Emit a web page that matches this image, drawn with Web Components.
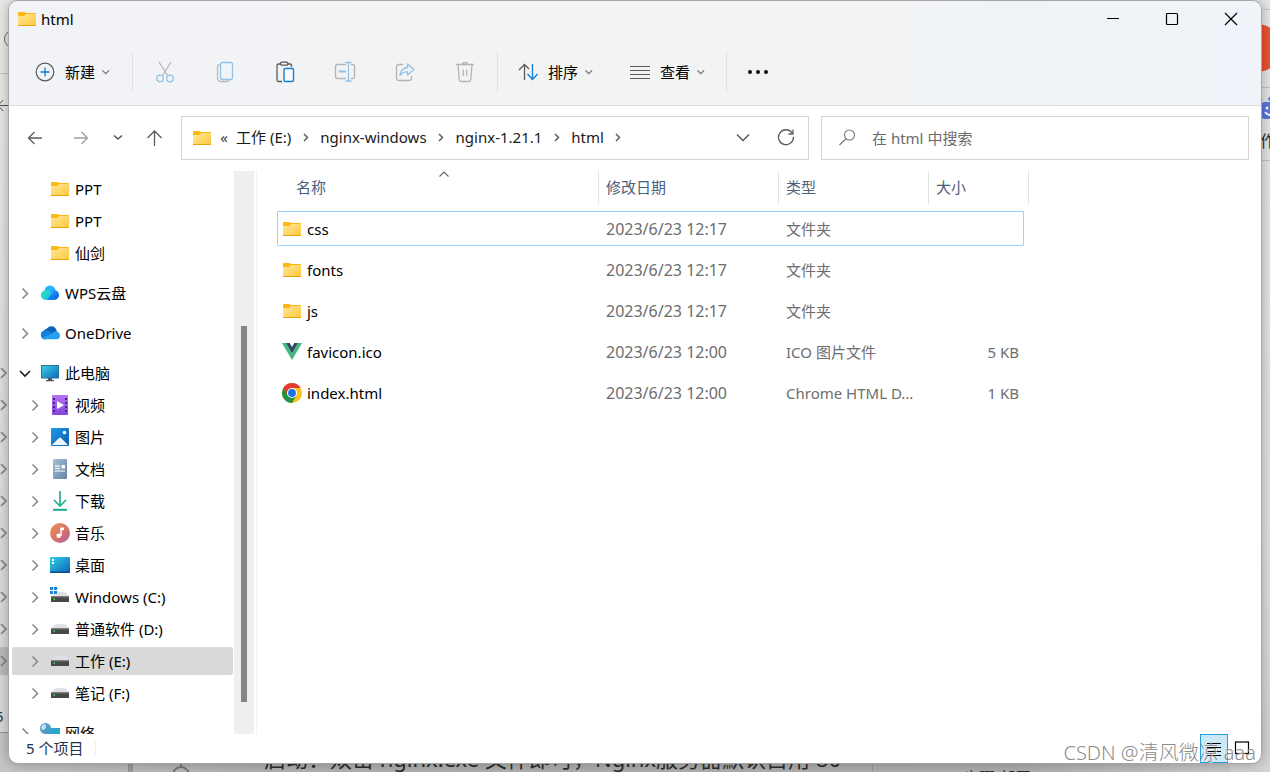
<!DOCTYPE html>
<html lang="zh-CN">
<head>
<meta charset="utf-8">
<title>html</title>
<style>
  html, body { margin: 0; height: 100%; }
  body {
    position: relative;
    overflow: hidden;
    background: #c4c4c4;
    color: #000;
    font: 15px/20px "Noto Sans", "Noto Sans CJK SC", sans-serif;
  }
</style>
</head>
<body>
<desktop-backdrop></desktop-backdrop>
<explorer-window></explorer-window>
<water-mark>CSDN @清风微凉 aaa</water-mark>

<script>
const ICONS = {
  folder: [20, 20, `<defs><linearGradient id="f" x1="0" y1="0" x2="1" y2="1"><stop offset="0" stop-color="#ffe79b"/><stop offset="1" stop-color="#ffc83a"/></linearGradient></defs>
    <path d="M1 4q0-1 1-1h5q1 0 2 1h9q1 0 1 1v11H1z" fill="#fbb612"/><path d="M1 7h6l2-2h10v11q0 1-1 1H2q-1 0-1-1z" fill="url(#f)"/><path d="M1 16.5h18" stroke="#e5a50e"/>`],
  chevR: [16, 16, `<path d="M5.5 3.5 10.5 8.5 5.5 13.5" fill="none" stroke="#8a8a8a" stroke-width="1.6"/>`],
  chevOpen: [16, 16, `<path d="M3 6l5 5 5-5" fill="none" stroke="#1c1c1c" stroke-width="1.6"/>`],
  crumbSep: [10, 14, `<path d="M3 4l3.500 3.500L3 11" fill="none" stroke="#5f5f5f" stroke-width="1.5"/>`],
  smallDown: [10, 10, `<path d="M1.500 3.500l3.300 3.200L8.100 3.500" fill="none" stroke="#777" stroke-width="1.1"/>`],
  navDown: [14, 14, `<path d="M3 4.500l4 3.500 4-3.500" fill="none" stroke="#555" stroke-width="1.5"/>`],
  boxDown: [16, 16, `<path d="M1 4.500l6 6 6-6" fill="none" stroke="#555" stroke-width="1.3"/>`],
  sortUp: [12, 8, `<path d="M1.500 5.500 6 1l4.500 4.500" fill="none" stroke="#666" stroke-width="1.1"/>`],
  back: [20, 20, `<path d="M17 10H3.500M9.500 4l-6 6 6 6" fill="none" stroke="#5c5c5c" stroke-width="1.3"/>`],
  forward: [20, 20, `<path d="M3 10h13.500M10.500 4l6 6-6 6" fill="none" stroke="#a0a0a0" stroke-width="1.3"/>`],
  up: [20, 20, `<path d="M10.500 18V3M3.500 10l7-7 7 7" fill="none" stroke="#5c5c5c" stroke-width="1.3"/>`],
  refresh: [20, 20, `<path d="M15.200 5A7.500 7.500 0 1 0 16.500 8.800M16 1.500V6h-4.500" fill="none" stroke="#5c5c5c" stroke-width="1.300"/>`],
  search: [20, 20, `<circle cx="12.500" cy="7" r="5" fill="none" stroke="#777" stroke-width="1.1"/><path d="M9 10.800 2.500 17" stroke="#777" stroke-width="1.200"/>`],
  min: [14, 14, `<path d="M1 6.500h12" stroke="#000"/>`],
  max: [14, 14, `<rect x="1.500" y="1.500" width="11" height="11" rx="1" fill="none" stroke="#000" stroke-width="1.200"/>`],
  close: [14, 14, `<path d="M1 1l12 12M13 1 1 13" stroke="#000" stroke-width="1.200"/>`],
  plus: [20, 20, `<circle cx="10" cy="10" r="8.800" fill="none" stroke="#5a5a5a" stroke-width="1.200"/><path d="M10 5.500v9M5.500 10h9" stroke="#0f7bd0" stroke-width="1.300"/>`],
  cut: [20, 22, `<path d="M4 1l8.800 14M16 1 7.200 15" fill="none" stroke="#b4b4b4" stroke-width="1.200"/><circle cx="5" cy="17.500" r="3.300" fill="none" stroke="#8fc3ea" stroke-width="1.300"/><circle cx="15" cy="17.500" r="3.300" fill="none" stroke="#8fc3ea" stroke-width="1.300"/>`],
  copy: [20, 22, `<path d="M4.500 3.500Q2.500 4 2.500 6v11q0 3.500 3.500 3.500h5.500q2 0 2.600-1.500" fill="none" stroke="#b9b9b9" stroke-width="1.300"/><rect x="5.500" y="1.500" width="12" height="17" rx="2" fill="none" stroke="#8fc3ea" stroke-width="1.300"/>`],
  paste: [20, 22, `<path d="M6 3H3.500Q2 3 2 4.500v14.500Q2 20.500 3.500 20.500H7M12.500 3H15q1.500 0 1.500 1.500V6" fill="none" stroke="#5a5a5a" stroke-width="1.300"/><rect x="5.500" y="1.200" width="7.500" height="3" rx="1.500" fill="none" stroke="#5a5a5a" stroke-width="1.300"/><rect x="9" y="7.500" width="9.500" height="13" rx="1.500" fill="#fafafa" stroke="#1580d2" stroke-width="1.400"/>`],
  rename: [22, 22, `<path d="M12 3.500H3.500Q1.500 3.500 1.500 5.500v10q0 2 2 2H12M17 3.500h1.500q2 0 2 2v10q0 2-2 2H17" fill="none" stroke="#b4b4b4" stroke-width="1.300"/><path d="M4.500 10.500H12" stroke="#8fc3ea" stroke-width="2"/><path d="M11.500 1.500h6M14.500 1.500v18.500M11.500 20h6" fill="none" stroke="#8fc3ea" stroke-width="1.300"/>`],
  share: [20, 22, `<path d="M8 3.500H4Q1.500 3.500 1.500 6v11Q1.500 19.500 4 19.500h10q2.500 0 2.500-2.500V15" fill="none" stroke="#b4b4b4" stroke-width="1.300"/><path d="M12.500 3 19 8.500 12.500 14V11Q8 10.500 5 14.500q.5-7 7.500-8z" fill="none" stroke="#8fc3ea" stroke-width="1.300" stroke-linejoin="round"/>`],
  trash: [20, 22, `<path d="M1 3.500h18M3 3.500l1.200 15q.2 2 2 2h7.600q1.800 0 2-2L17 3.500M7.500 3.500Q7.500 1.500 10 1.500t2.500 2M8.300 8.500v6.500M11.700 8.500v6.500" fill="none" stroke="#b4b4b4" stroke-width="1.300"/>`],
  sort: [20, 20, `<path d="M6.500 18V2.500M1 8l5.500-5.500L11 7" fill="none" stroke="#5a5a5a" stroke-width="1.300"/><path d="M14.500 2v15.500M9.500 12l5 5.500 5-5.500" fill="none" stroke="#1580d2" stroke-width="1.400"/>`],
  view: [20, 20, `<path d="M0 4.500h20M0 8.500h20M0 12.500h20M0 16.500h20" stroke="#5a5a5a" stroke-width="1.200"/>`],
  more: [22, 20, `<circle cx="2" cy="10" r="2"/><circle cx="10" cy="10" r="2"/><circle cx="18" cy="10" r="2"/>`],
  wps: [20, 20, `<defs><linearGradient id="a" x1="0" y1="0" x2="1" y2="1"><stop offset="0" stop-color="#37e8b4"/><stop offset="1" stop-color="#12b4f5"/></linearGradient><linearGradient id="b" x1="0" y1="0" x2="1" y2="1"><stop offset="0" stop-color="#2ab4ff"/><stop offset="1" stop-color="#0550d8"/></linearGradient></defs>
    <circle cx="10" cy="8" r="5.500" fill="#26b2ff"/><circle cx="14" cy="12" r="5" fill="url(#b)"/><path d="M6 17a5 5 0 1 1 2-9.500q3 1 4.500 3.500L9 16q-1 1-3 1z" fill="url(#a)"/><path d="M7 17h7.500l-3-6z" fill="#0b7df0"/>`],
  onedrive: [20, 20, `<path d="M3 9q1-3 4-3.500 2-2.500 5-2.200 4 .7 5 5.200l-6 3z" fill="#0a64b8"/><path d="M4.500 16.500A4.700 4.700 0 0 1 4 7.500q3-1 5.500.7L14 11 7 16z" fill="#1480dc"/><path d="M2.500 15 12 10.500Q15 7.500 18 9q2 1.200 2 3.500 0 3.500-3.500 3.800H5q-1.500 0-2.500-1.300z" fill="#27a1ee"/>`],
  pc: [20, 20, `<defs><linearGradient id="p" x1="0" y1="0" x2="1" y2="1"><stop offset="0" stop-color="#3ad2e6"/><stop offset="1" stop-color="#0d68ba"/></linearGradient></defs><rect x="1.500" y="2.500" width="17" height="12.500" fill="url(#p)" stroke="#26739c"/><path d="M8 15h4v2h2v1.300H6V17h2z" fill="#4c5863"/>`],
  video: [20, 20, `<defs><linearGradient id="v" x1="0" y1="0" x2="0" y2="1"><stop offset="0" stop-color="#b574f2"/><stop offset="1" stop-color="#8446dc"/></linearGradient></defs><rect x="2" y="0" width="16" height="20" rx="1" fill="url(#v)"/><path d="M3 3h2v2H3zm0 4h2v2H3zm0 4h2v2H3zm0 4h2v2H3zM15 3h2v2h-2zm0 4h2v2h-2zm0 4h2v2h-2zm0 4h2v2h-2z" fill="#4a2383"/><path d="M7 6l7 4.200L7 14z" fill="#fff"/>`],
  image: [20, 20, `<defs><linearGradient id="i" x1="0" y1="0" x2="1" y2="1"><stop offset="0" stop-color="#1e9be6"/><stop offset="1" stop-color="#0a5cb0"/></linearGradient></defs><rect x="1" y="1" width="18" height="18" rx="1" fill="url(#i)"/><circle cx="14.500" cy="5.500" r="1.700" fill="#fff"/><path d="M2 18l7-7q1-1 2 0l7 7z" fill="#f1f7fd"/>`],
  doc: [20, 20, `<defs><linearGradient id="d" x1="0" y1="0" x2="1" y2="1"><stop offset="0" stop-color="#a9c1d6"/><stop offset="1" stop-color="#6482a4"/></linearGradient></defs><rect x="3" y="0" width="14" height="20" rx="1" fill="url(#d)"/><path d="M5 7.200h5M5 9.500h5M5 12h10" stroke="#fff" stroke-width="1.200"/><path d="M11.500 6H15v3.500h-3.500z" fill="#fff"/>`],
  download: [20, 20, `<path d="M10 0v14.500M4 9l6 6 6-6" fill="none" stroke="#22b08d" stroke-width="1.700"/><path d="M3 18.800h14" stroke="#1aa894" stroke-width="2"/>`],
  music: [20, 20, `<defs><linearGradient id="m" x1="0" y1="0" x2="1" y2="1"><stop offset="0" stop-color="#f0914b"/><stop offset=".6" stop-color="#d4706f"/><stop offset="1" stop-color="#a860b0"/></linearGradient></defs><circle cx="10" cy="10" r="10" fill="url(#m)"/><circle cx="8.700" cy="12.800" r="2.300" fill="#fff"/><path d="M10.200 13V4.500H14v2.700h-2.300V13z" fill="#fff"/>`],
  desktop: [20, 20, `<defs><linearGradient id="k" x1="0" y1="0" x2="1" y2="1"><stop offset="0" stop-color="#2fd2e2"/><stop offset="1" stop-color="#0c62bb"/></linearGradient></defs><rect y="2" width="20" height="16" rx="1" fill="url(#k)"/><path d="M2 4h2v2H2zm0 3h2v2H2z" fill="#fff"/><path d="M0 17.200h20" stroke="#0b4b86" stroke-width="1.500"/>`],
  drive: [20, 20, `<path d="M4 6.500Q5 5 7 5h7q2 0 3 1.500L19 10H1z" fill="#dfe0e3"/><rect x="1" y="9.500" width="18" height="5.500" fill="#484848"/><path d="M1 10h18" stroke="#6a6a6a"/><path d="M3.500 11.500h1.500V13H3.500z" fill="#36e05a"/>`],
  sysdrive: [20, 20, `<path d="M4 6.500Q5 5 7 5h7q2 0 3 1.500L19 10H1z" fill="#dfe0e3"/><rect x="1" y="9.500" width="18" height="5.500" fill="#484848"/><path d="M1 10h18" stroke="#6a6a6a"/><path d="M3.500 11.500h1.500V13H3.500z" fill="#36e05a"/><path d="M0 0h8v7.500h-8z" fill="#fff"/><path d="M0 0h3.200v3H0zm4 0h3.200v3H4zM0 4h3.200v3H0zm4 0h3.200v3H4z" fill="#1b84d8"/>`],
  network: [20, 20, `<rect x="6" y="5" width="14" height="11" fill="#2ba6cf"/><circle cx="5.500" cy="5.500" r="5.500" fill="#4c9dc9"/><path d="M3 1.500q4-1 3 2.500T2 7Q0 4 3 1.500z" fill="#bfe2f0"/>`],
  vue: [20, 20, `<path d="M0 1h4l6 10.500L16 1h4L10 18z" fill="#41b883"/><path d="M4 1h3.700L10 5l2.300-4H16l-6 10.500z" fill="#35495e"/>`],
  chrome: [20, 20, `<circle cx="10" cy="10" r="10" fill="#fbc116"/><path d="M10 10 1.340 5A10 10 0 0 0 10 20l4.300-7.500z" fill="#229342"/><path d="M1.340 5A10 10 0 0 1 18.660 5H10L5.700 12.500z" fill="#e33b2e"/><circle cx="10" cy="10" r="5" fill="#fff"/><circle cx="10" cy="10" r="3.900" fill="#1a73e8"/>`],
  details: [16, 16, `<path d="M1 2.500h14M1 6.500h14M1 10.500h14M1 14.500h14" stroke="#000"/>`],
  tiles: [16, 16, `<rect x="1.500" y="1" width="13" height="11.500" fill="none" stroke="#000" stroke-width="1.200"/>`]
};

function define(name, html, setup) {
  const template = document.createElement('template');
  template.innerHTML = html;
  customElements.define(name, class extends HTMLElement {
    constructor() {
      super();
      this.attachShadow({ mode: 'open' }).append(template.content.cloneNode(true));
    }
    connectedCallback() { if (setup) setup(this, this.shadowRoot); }
  });
}

define('ui-icon', `<style>:host{display:inline-flex;flex:none}svg{display:block}</style><span></span>`, (el, root) => {
  const [w, h, body] = ICONS[el.getAttribute('name')];
  root.querySelector('span').innerHTML = `<svg width="${w}" height="${h}" viewBox="0 0 ${w} ${h}" aria-hidden="true">${body}</svg>`;
});

const BUTTON_RESET = `button{font:inherit;color:inherit;background:none;border:0;margin:0;padding:0;display:flex;align-items:center;justify-content:center}`;

define('title-bar', `
<style>
  :host { display: flex; align-items: center; height: 36px; padding-right: 1px; }
  .name { display: flex; align-items: center; gap: 4px; padding-left: 8px; flex: 1; }
  ${BUTTON_RESET}
  button { width: 59px; height: 36px; }
</style>
<div class="name"><ui-icon name="folder"></ui-icon><span><slot></slot></span></div>
<button aria-label="最小化"><ui-icon name="min"></ui-icon></button>
<button aria-label="最大化"><ui-icon name="max"></ui-icon></button>
<button aria-label="关闭"><ui-icon name="close"></ui-icon></button>`);

define('tool-button', `
<style>
  :host { display: block; }
  ${BUTTON_RESET}
  button { height: 40px; gap: 10px; padding: 0 18px; }
  .label { display: flex; align-items: center; gap: 6px; }
  :host([first]) button { padding: 0 19px 0 26px; }
  :host([compact]) button { width: 60px; padding: 0; }
</style>
<button></button>`, (el, root) => {
  const compact = el.hasAttribute('compact');
  const button = root.querySelector('button');
  button.innerHTML = `<ui-icon name="${el.getAttribute('icon')}"></ui-icon>` +
    (compact ? '' : `<span class="label"><slot></slot><ui-icon name="smallDown"></ui-icon></span>`);
  if (compact) button.setAttribute('aria-label', el.getAttribute('label'));
});

define('tool-bar', `
<style>
  :host { display: flex; align-items: center; height: 66px; padding-top: 2px; border-bottom: 1px solid #dcdde0; }
  i { width: 1px; height: 40px; margin: 0 2px; background: #dfe0e2; }
</style>
<tool-button first icon="plus">新建</tool-button><i></i>
<tool-button compact icon="cut" label="剪切"></tool-button>
<tool-button compact icon="copy" label="复制"></tool-button>
<tool-button compact icon="paste" label="粘贴"></tool-button>
<tool-button compact icon="rename" label="重命名"></tool-button>
<tool-button compact icon="share" label="共享"></tool-button>
<tool-button compact icon="trash" label="删除"></tool-button><i></i>
<tool-button icon="sort">排序</tool-button>
<tool-button icon="view">查看</tool-button><i></i>
<tool-button compact icon="more" label="更多"></tool-button>`);

define('address-row', `
<style>
  :host { display: grid; grid-template-columns: 172px 157fr 110fr; padding: 10px 12px 11px 0; }
  ${BUTTON_RESET}
  nav { display: grid; grid-template-columns: 52px 40px 34px 38px; align-items: center; }
  .box { display: flex; align-items: center; height: 42px; border: 1px solid #d6d6d6; background: #fff; }
  .path { padding: 0 0 0 10px; }
  .back { width: 24px; text-align: center; color: #444; padding-bottom: 2px; }
  .crumbs { display: flex; flex: 1; padding-bottom: 2px; }
  a { color: #1a1a1a; text-decoration: none; white-space: nowrap; }
  .sep { display: inline-flex; align-items: center; justify-content: center; width: 29px; }
  .path button { width: 43px; height: 42px; }
  .search { margin-left: 12px; padding-left: 15px; gap: 15px; }
  input { flex: 1; min-width: 0; border: 0; padding: 0; outline: 0; background: none; font: inherit; }
  input::placeholder { color: #6b6b6b; opacity: 1; }
</style>
<nav aria-label="导航">
  <button aria-label="后退"><ui-icon name="back"></ui-icon></button>
  <button aria-label="前进"><ui-icon name="forward"></ui-icon></button>
  <button aria-label="最近位置"><ui-icon name="navDown"></ui-icon></button>
  <button aria-label="向上"><ui-icon name="up"></ui-icon></button>
</nav>
<div class="box path">
  <ui-icon name="folder"></ui-icon><span class="back">«</span>
  <div class="crumbs">
    <a href="#">工作 (E:)</a><span class="sep"><ui-icon name="crumbSep"></ui-icon></span>
    <a href="#">nginx-windows</a><span class="sep"><ui-icon name="crumbSep"></ui-icon></span>
    <a href="#">nginx-1.21.1</a><span class="sep"><ui-icon name="crumbSep"></ui-icon></span>
    <a href="#">html</a><span class="sep"><ui-icon name="crumbSep"></ui-icon></span>
  </div>
  <button aria-label="展开"><ui-icon name="boxDown"></ui-icon></button>
  <button aria-label="刷新"><ui-icon name="refresh"></ui-icon></button>
</div>
<div class="box search">
  <ui-icon name="search"></ui-icon>
  <input type="search" placeholder="在 html 中搜索" aria-label="在 html 中搜索">
</div>`);

define('tree-item', `
<style>
  :host { display: block; padding: 2px 1px 2px 3px; }
  :host([root]) { margin-top: 8px; }
  a { display: flex; align-items: center; height: 28px; padding-left: 15px; border-radius: 2px; color: #000; text-decoration: none; white-space: nowrap; }
  :host([root]) a { padding-left: 5px; }
  :host([selected]) a { background: #d9d9d9; }
  .toggle { width: 16px; margin-right: 7px; display: flex; }
  .text { margin-left: 5px; }
</style>
<a href="#"></a>`, (el, root) => {
  const toggle = el.getAttribute('toggle');
  root.querySelector('a').innerHTML =
    `<span class="toggle">${toggle ? `<ui-icon name="${toggle}"></ui-icon>` : ''}</span>` +
    `<ui-icon name="${el.getAttribute('icon')}"></ui-icon><span class="text"><slot></slot></span>`;
});

define('nav-tree', `
<style>
  :host { display: grid; grid-template-columns: 225px 20px; min-height: 0; border-right: 1px solid #f3f3f3; padding-right: 2px; }
  .items { overflow: hidden; padding-top: 2px; min-height: 0; }
  .track { background: #efefef; display: grid; grid-template-rows: 155fr 376fr 32fr; justify-content: center; }
  .thumb { grid-row: 2; width: 6px; background: #868686; }
</style>
<div class="items">
  <tree-item icon="folder">PPT</tree-item>
  <tree-item icon="folder">PPT</tree-item>
  <tree-item icon="folder">仙剑</tree-item>
  <tree-item root toggle="chevR" icon="wps">WPS云盘</tree-item>
  <tree-item root toggle="chevR" icon="onedrive">OneDrive</tree-item>
  <tree-item root toggle="chevOpen" icon="pc">此电脑</tree-item>
  <tree-item toggle="chevR" icon="video">视频</tree-item>
  <tree-item toggle="chevR" icon="image">图片</tree-item>
  <tree-item toggle="chevR" icon="doc">文档</tree-item>
  <tree-item toggle="chevR" icon="download">下载</tree-item>
  <tree-item toggle="chevR" icon="music">音乐</tree-item>
  <tree-item toggle="chevR" icon="desktop">桌面</tree-item>
  <tree-item toggle="chevR" icon="sysdrive">Windows (C:)</tree-item>
  <tree-item toggle="chevR" icon="drive">普通软件 (D:)</tree-item>
  <tree-item selected toggle="chevR" icon="drive">工作 (E:)</tree-item>
  <tree-item toggle="chevR" icon="drive">笔记 (F:)</tree-item>
  <tree-item root toggle="chevR" icon="network">网络</tree-item>
</div>
<div class="track"><div class="thumb"></div></div>`);

const FILES = [
  ['folder', 'css', '2023/6/23 12:17', '文件夹', ''],
  ['folder', 'fonts', '2023/6/23 12:17', '文件夹', ''],
  ['folder', 'js', '2023/6/23 12:17', '文件夹', ''],
  ['vue', 'favicon.ico', '2023/6/23 12:00', 'ICO 图片文件', '5 KB'],
  ['chrome', 'index.html', '2023/6/23 12:00', 'Chrome HTML D...', '1 KB']
];

define('file-table', `
<style>
  :host { display: block; padding-left: 20px; }
  table { width: 752px; table-layout: fixed; border-collapse: separate; border-spacing: 0; }
  th { height: 37px; padding: 0; vertical-align: top; text-align: left; font-weight: 400; color: #4c607a; position: relative; }
  th div { height: 33px; line-height: 33px; border-right: 1px solid #e2e2e2; padding-left: 7px; box-sizing: border-box; }
  th:first-child div { padding-left: 19px; }
  .arrow { position: absolute; left: 50%; top: 0; line-height: 0; }
  td { height: 41px; padding: 0 0 0 7px; color: #6d6d6d; white-space: nowrap; }
  td:first-child { padding-left: 5px; color: #000; }
  td:nth-child(2) { font-size: 16px; }
  td:last-child { text-align: right; padding-right: 10px; }
  .name { display: flex; align-items: center; gap: 5px; }
  tr.focus { position: relative; }
  tr.focus::after { content: ""; position: absolute; inset: 3px 5px 3px 0; border: 1px solid #99d1ff; border-radius: 1px; }
</style>
<table>
  <colgroup><col style="width:322px"><col style="width:180px"><col style="width:150px"><col style="width:100px"></colgroup>
  <thead><tr>
    <th scope="col"><div>名称</div><span class="arrow"><ui-icon name="sortUp"></ui-icon></span></th>
    <th scope="col"><div>修改日期</div></th>
    <th scope="col"><div>类型</div></th>
    <th scope="col"><div>大小</div></th>
  </tr></thead>
  <tbody></tbody>
</table>`, (el, root) => {
  root.querySelector('tbody').innerHTML = FILES.map(([icon, name, date, type, size], i) =>
    `<tr${i ? '' : ' class="focus"'}><td><span class="name"><ui-icon name="${icon}"></ui-icon><span>${name}</span></span></td><td>${date}</td><td>${type}</td><td>${size}</td></tr>`).join('');
});

define('status-bar', `
<style>
  :host { display: flex; align-items: center; height: 29px; padding: 0 9px 0 17px; color: #1e3450; }
  .count { flex: 1; padding-bottom: 2px; }
  .count span { display: inline-block; padding-right: 12px; border-right: 1px solid #f0f0f0; height: 14px; line-height: 14px; }
  ${BUTTON_RESET}
  button { width: 20px; height: 29px; }
  .on { width: 28px; box-sizing: border-box; background: #cce8f6; border: 1px solid #26a0da; margin-right: 4px; }
</style>
<div class="count"><span><slot></slot></span></div>
<button class="on" aria-label="详细信息"><ui-icon name="details"></ui-icon></button>
<button aria-label="大图标"><ui-icon name="tiles"></ui-icon></button>`);

define('explorer-window', `
<style>
  :host { display: block; position: relative; padding: 0 8px 8px; height: 100%; box-sizing: border-box; }
  main { display: grid; grid-template-rows: auto auto minmax(0, 1fr) auto; height: 100%; box-sizing: border-box; border: 1px solid #a6a6a6; border-radius: 10px; background: #fff; overflow: hidden; box-shadow: 0 0 14px rgba(0,0,0,.3); }
  header { background: linear-gradient(90deg, #f1f3f8, #f2f3f5 25%, #f3f3f3 45%, #f1f3f5 70%, #f0f3f9); }
  .body { display: grid; grid-template-columns: auto 1fr; min-height: 0; }
</style>
<main>
  <header><title-bar>html</title-bar><tool-bar></tool-bar></header>
  <address-row></address-row>
  <div class="body"><nav-tree></nav-tree><file-table></file-table></div>
  <status-bar>5 个项目</status-bar>
</main>`);

define('desktop-backdrop', `
<style>
  :host { display: block; position: absolute; inset: 0; overflow: hidden; background: linear-gradient(90deg, #c6c6c6, #b4b4b4 20%, #b0b0b0 80%, #d2d2d2); }
  .left { position: absolute; left: 0; top: 0; width: 40px; height: 732px; background: linear-gradient(#ececec, #e2e2e2 50%, #dadada); border-bottom: 1px solid #999; }
  .right { position: absolute; right: 0; top: 0; width: 40px; height: 100%; background: linear-gradient(#e8e8e8, #e2e2e2 70%, #d4d4d4); }
  svg { position: absolute; top: 0; }
  .left svg { left: 0; } .right svg { right: 0; }
  span { position: absolute; white-space: nowrap; color: #2c2c2c; }
  .line { left: 264px; top: 744px; font-size: 22px; line-height: 28px; }
  .side { left: 963px; top: 768px; font-size: 16px; line-height: 20px; }
  .count { left: -5px; top: 706px; color: #1e3450; }
  .word { right: -6px; top: 131px; font-size: 16px; }
  .marks { left: 120px; }
</style>
<div class="left">
  <svg width="40" height="732" fill="none" stroke="#6a6a6a">
    <path d="M0 647h40v28H0z" fill="#bdbdbd" stroke="none"/>
    <path d="M0 73.500h40" stroke="#c8c8c8"/><circle cx="13" cy="39" r="8.500"/>
    <path d="M0 105.500h9M3 100l-5 5.500 5 5.500" stroke="#555"/>
    <path d="M1 368l5 5-5 5M1 400l5 5-5 5M1 432l5 5-5 5M1 464l5 5-5 5M1 496l5 5-5 5M1 528l5 5-5 5M1 560l5 5-5 5M1 592l5 5-5 5M1 624l5 5-5 5M1 656l5 5-5 5" stroke="#808080" stroke-width="1.500"/>
  </svg>
  <span class="count">5 个</span>
</div>
<div class="right">
  <svg width="40" height="200"><path d="M0 9.500h40M0 87.500h40M0 160.500h40" stroke="#c6c6c6"/>
    <circle cx="27" cy="48" r="24" fill="#ea5430"/>
    <rect x="31" y="102" width="18" height="17" rx="4" fill="#5a78e4"/><circle cx="40" cy="99" r="2" fill="#4a90e2"/><circle cx="37" cy="108" r="1.500" fill="#fff"/><path d="M35 112q2 3 6 3" stroke="#fff" stroke-width="2" fill="none"/></svg>
  <span class="word">作</span>
</div>
<svg class="marks" width="760" height="772"><path d="M8 760h5v12H8z" fill="#9a9a9a"/><path d="M752.500 760v12" stroke="#999"/><circle cx="61" cy="775" r="8" fill="none" stroke="#777" stroke-width="2"/><path d="M61 764v4" stroke="#777" stroke-width="2"/></svg>
<span class="line">启动：双击 nginx.exe 文件即可，Nginx服务器默认占用 80</span>
<span class="side">步骤 部署</span>`);

define('water-mark', `
<style>
  :host { position: absolute; right: 14px; bottom: 7px; font: 300 20px/24px "Noto Sans", "Noto Sans CJK SC", sans-serif; color: #8c8c8c; text-shadow: 1px 1px 0 rgba(255,255,255,.7); pointer-events: none; white-space: nowrap; }
</style>
<slot></slot>`);
</script>
</body>
</html>
